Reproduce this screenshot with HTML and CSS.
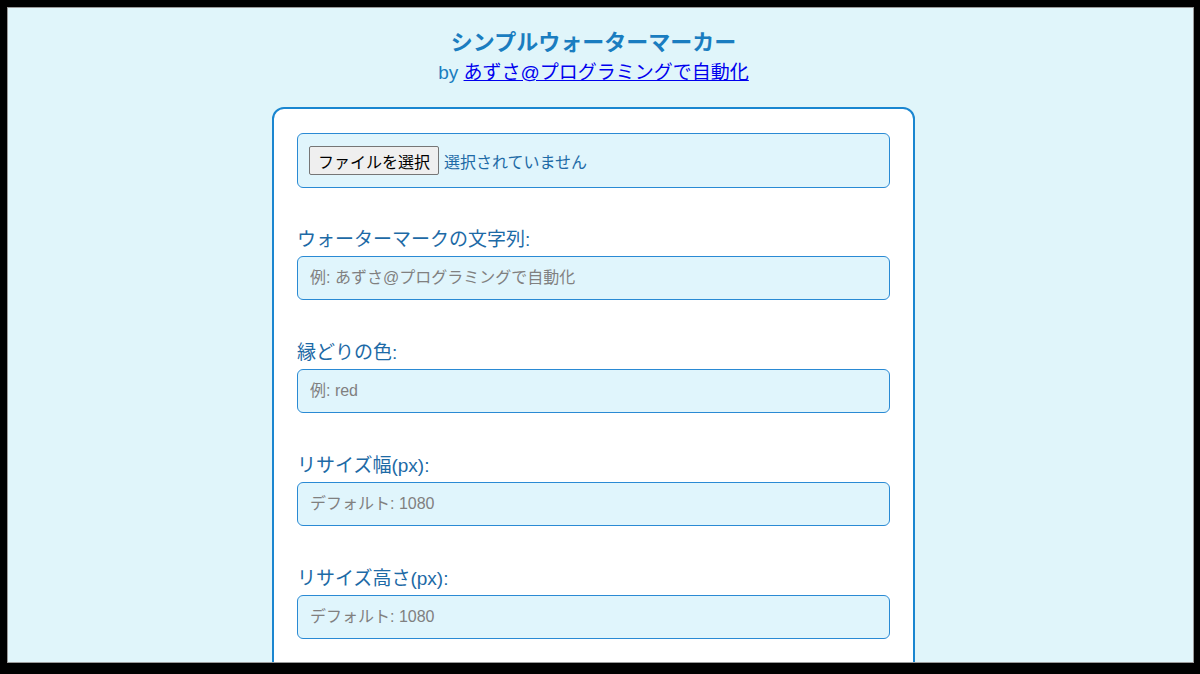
FILE: index.html
```html
<!DOCTYPE html>
<html lang="ja">
<head>
    <meta charset="UTF-8">
    <meta name="viewport" content="width=device-width, initial-scale=1.0">
    <title>シンプルウォーターマーカー</title>
    <link rel="stylesheet" href="styles.css">
</head>
<body>
    <div class="frame">
        <header class="header">
            <h1>シンプルウォーターマーカー</h1>
            <p class="byline">by <a href="#">あずさ@プログラミングで自動化</a></p>
        </header>

        <div class="container">
            <form id="watermarkForm">
                <!-- 画像ファイル -->
                <div class="file-box">
                    <button type="button" class="file-btn">ファイルを選択</button>
                    <span class="file-name">選択されていません</span>
                </div>

                <!-- 文字列 -->
                <div class="group">
                    <label for="text">ウォーターマークの文字列:</label>
                    <input type="text" id="text" placeholder="例: あずさ@プログラミングで自動化">
                </div>

                <!-- 縁どり -->
                <div class="group">
                    <label for="stroke">縁どりの色:</label>
                    <input type="text" id="stroke" placeholder="例: red">
                </div>

                <!-- サイズ -->
                <div class="group">
                    <label for="width">リサイズ幅(px):</label>
                    <input type="number" id="width" placeholder="デフォルト: 1080">
                </div>

                <div class="group">
                    <label for="height">リサイズ高さ(px):</label>
                    <input type="number" id="height" placeholder="デフォルト: 1080">
                </div>
            </form>
        </div>
    </div>
</body>
</html>
```

FILE: styles.css
```css
html, body {
    margin: 0;
    height: 100%;
}
body {
    background-color: #000;
    padding: 7px 6px 11px 7px;
    box-sizing: border-box;
    overflow: hidden;
    font-family: "Liberation Sans", "Noto Sans CJK JP", sans-serif;
}
.frame {
    height: 100%;
    box-sizing: border-box;
    border: 1px solid #9a9a9a;
    background-color: #e0f5fa;
    padding-right: 14px;
    overflow: hidden;
}
.header {
    text-align: center;
    padding-top: 21px;
}
h1 {
    margin: 0;
    font-size: 22px;
    line-height: 28px;
    color: #1a7dc0;
}
.byline {
    margin: 3px 0 0 0;
    font-size: 19px;
    line-height: 26px;
    color: #1a7dc0;
}
.byline a {
    color: #0000ee;
}
.container {
    width: 643px;
    box-sizing: border-box;
    margin: 21px auto 0 auto;
    background-color: #fff;
    border: 2px solid #1a86d0;
    border-radius: 12px;
    padding: 24px 23px;
}
.file-box {
    display: flex;
    align-items: center;
    height: 55px;
    box-sizing: border-box;
    padding: 0 11px;
    background-color: #e0f5fc;
    border: 1px solid #2a8ad4;
    border-radius: 6px;
    margin-bottom: 41px;
}
.file-btn {
    font-family: inherit;
    font-size: 16px;
    height: 29px;
    padding: 0 8px;
    background-color: #efefef;
    border: 1px solid #767676;
    border-radius: 2px;
    color: #000;
}
.file-name {
    margin-left: 5px;
    font-size: 16px;
    color: #1d6aa6;
}
.group {
    margin-bottom: 42px;
}
label {
    display: block;
    font-size: 19px;
    line-height: 22px;
    color: #1d6aa6;
    margin-bottom: 5px;
}
input {
    display: block;
    width: 100%;
    height: 44px;
    box-sizing: border-box;
    padding: 0 12px;
    font-family: inherit;
    font-size: 16px;
    background-color: #e0f5fc;
    border: 1px solid #2a8ad4;
    border-radius: 6px;
    color: #333;
}
input::placeholder {
    color: #808080;
}
```
